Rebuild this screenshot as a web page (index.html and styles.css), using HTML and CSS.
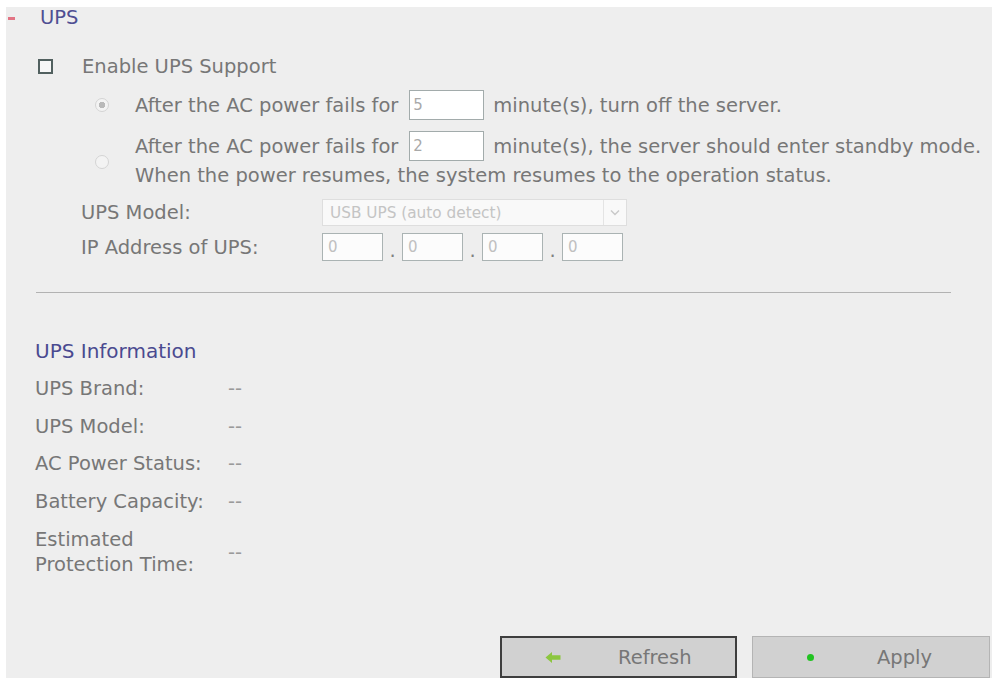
FILE: index.html
```html
<!DOCTYPE html>
<html lang="en">
<head>
<meta charset="utf-8">
<title>UPS</title>
<link rel="stylesheet" href="styles.css">
</head>
<body>
<div class="panel">
  <div class="sec-head">
    <span class="toggle"></span>
    <span class="sec-title">UPS</span>
  </div>

  <div class="enable">
    <input type="checkbox" class="chk">
    <span>Enable UPS Support</span>
  </div>

  <div class="opt opt1">
    <input type="radio" class="rad" name="mode" checked disabled>
    <span>After the AC power fails for</span>
    <input type="text" class="num" value="5" disabled>
    <span>minute(s), turn off the server.</span>
  </div>

  <div class="opt opt2">
    <input type="radio" class="rad" name="mode" disabled>
    <div class="opt-text">
      <div class="opt-line">
        <span>After the AC power fails for</span>
        <input type="text" class="num" value="2" disabled>
        <span>minute(s), the server should enter standby mode.</span>
      </div>
      <div class="opt-line2">When the power resumes, the system resumes to the operation status.</div>
    </div>
  </div>

  <div class="field model-row">
    <span class="field-label">UPS Model:</span>
    <div class="select">
      <span class="select-text">USB UPS (auto detect)</span>
      <span class="select-arrow">
        <svg width="10" height="7" viewBox="0 0 10 7"><path d="M1 1.5 L5 5.5 L9 1.5" fill="none" stroke="#c8c8c8" stroke-width="1.4"/></svg>
      </span>
    </div>
  </div>

  <div class="field ip-row">
    <span class="field-label">IP Address of UPS:</span>
    <div class="ip">
      <input type="text" class="ip-box" value="0" disabled>
      <span class="ip-dot">.</span>
      <input type="text" class="ip-box" value="0" disabled>
      <span class="ip-dot">.</span>
      <input type="text" class="ip-box" value="0" disabled>
      <span class="ip-dot">.</span>
      <input type="text" class="ip-box" value="0" disabled>
    </div>
  </div>

  <div class="divider"></div>

  <div class="info-title">UPS Information</div>

  <div class="info">
    <div class="info-row"><span class="info-label">UPS Brand:</span><span class="info-val">--</span></div>
    <div class="info-row"><span class="info-label">UPS Model:</span><span class="info-val">--</span></div>
    <div class="info-row"><span class="info-label">AC Power Status:</span><span class="info-val">--</span></div>
    <div class="info-row"><span class="info-label">Battery Capacity:</span><span class="info-val">--</span></div>
    <div class="info-row info-row-2"><span class="info-label">Estimated<br>Protection Time:</span><span class="info-val">--</span></div>
  </div>

  <div class="actions">
    <button class="btn btn-refresh">
      <svg class="btn-icon" width="16" height="13" viewBox="0 0 16 13"><path d="M0.5 6.5 L7 1 L7 4.3 L15.5 4.3 L15.5 8.7 L7 8.7 L7 12 Z" fill="#8cc63f"/></svg>
      <span>Refresh</span>
    </button>
    <button class="btn btn-apply">
      <span class="dot"></span>
      <span>Apply</span>
    </button>
  </div>
</div>
</body>
</html>
```

FILE: styles.css
```css
html, body {
  margin: 0;
  background: #ffffff;
}

body {
  padding-top: 7px;
  font-family: "DejaVu Sans", "Liberation Sans", sans-serif;
  font-size: 19.5px;
  color: #777777;
  overflow: hidden;
}

.panel {
  margin-left: 6px;
  width: 986px;
  height: 671px;
  background: #eeeeee;
  overflow: hidden;
}

.sec-head {
  display: flex;
  align-items: center;
  height: 22px;
  padding-left: 2px;
}

.toggle {
  width: 7px;
  height: 3px;
  background: #e27484;
  margin-right: 25px;
}

.sec-title {
  color: #4f4f93;
  line-height: 22px;
}

.enable {
  display: flex;
  align-items: center;
  height: 29px;
  margin-top: 23px;
  padding-left: 32px;
}

.chk {
  appearance: none;
  -webkit-appearance: none;
  box-sizing: border-box;
  width: 15px;
  height: 15px;
  margin: 0 29px 0 0;
  border: 2px solid #51605f;
  background: #f7f7f7;
}

.opt {
  display: flex;
  align-items: center;
  padding-left: 89px;
}

.opt1 {
  height: 30px;
  margin-top: 9px;
}

.opt2 {
  margin-top: 11px;
}

.rad {
  appearance: none;
  -webkit-appearance: none;
  box-sizing: border-box;
  width: 14px;
  height: 14px;
  margin: 0 26px 0 0;
  border-radius: 50%;
  border: 1px solid #d4d4d4;
  background: #f3f3f3;
  flex: none;
}

.rad:checked {
  background: radial-gradient(circle, #b9b9b9 0 3px, #f3f3f3 3.5px);
}

.opt2 .rad {
  margin-top: 3px;
}

.opt-line {
  display: flex;
  align-items: center;
  height: 30px;
}

.opt-line2 {
  line-height: 29px;
}

.num {
  box-sizing: border-box;
  width: 75px;
  height: 30px;
  margin: 0 9px 0 11px;
  padding: 0 0 0 3px;
  border: 1px solid #a2abab;
  background: #ffffff;
  font-family: "DejaVu Sans", sans-serif;
  font-size: 15px;
  color: #a9a9a9;
}

.field {
  display: flex;
  align-items: center;
  padding-left: 75px;
}

.field-label {
  width: 241px;
  flex: none;
}

.model-row {
  height: 27px;
  margin-top: 9px;
}

.select {
  box-sizing: border-box;
  width: 305px;
  height: 27px;
  display: flex;
  align-items: center;
  border: 1px solid #dedede;
  background: #f9f9f9;
}

.select-text {
  flex: 1;
  padding-left: 7px;
  font-size: 15.3px;
  color: #c4c4c4;
}

.select-arrow {
  box-sizing: border-box;
  width: 23px;
  height: 25px;
  display: flex;
  align-items: center;
  justify-content: center;
  border-left: 1px solid #e4e4e4;
}

.ip-row {
  height: 28px;
  margin-top: 7px;
}

.ip {
  display: flex;
  align-items: center;
}

.ip-box {
  box-sizing: border-box;
  width: 61px;
  height: 28px;
  margin: 0;
  padding: 0 0 0 5px;
  border: 1px solid #aab3b3;
  background: #fcfcfc;
  font-family: "DejaVu Sans", sans-serif;
  font-size: 15px;
  color: #c0c0c0;
}

.ip-dot {
  width: 19px;
  text-align: center;
  color: #808080;
  padding-top: 6px;
}

.divider {
  margin: 31px 0 0 30px;
  width: 915px;
  height: 1px;
  background: #b2b2b2;
}

.info-title {
  margin: 46px 0 0 29px;
  line-height: 24px;
  font-size: 20px;
  color: #4a4a90;
}

.info {
  margin-top: 7px;
  padding-left: 29px;
}

.info-row {
  display: flex;
  align-items: center;
  height: 37.5px;
}

.info-row-2 {
  height: 50px;
  margin-top: 7px;
  line-height: 25px;
}

.info-label {
  width: 193px;
  flex: none;
}

.info-val {
  color: #9a9a9a;
}

.actions {
  display: flex;
  justify-content: flex-end;
  gap: 15px;
  padding-right: 2px;
  margin-top: 59px;
}

.btn {
  box-sizing: border-box;
  width: 237px;
  height: 42px;
  display: flex;
  align-items: center;
  margin: 0;
  background: #d1d1d1;
  font-family: "DejaVu Sans", sans-serif;
  font-size: 19.5px;
  color: #777777;
  cursor: pointer;
}

.btn-refresh {
  border: 2px solid #3e3e3e;
  padding-left: 43px;
}

.btn-refresh .btn-icon {
  margin-right: 57px;
}

.btn-apply {
  width: 238px;
  border: 1px solid #b4b4b4;
  padding-left: 54px;
}

.dot {
  width: 7px;
  height: 7px;
  border-radius: 50%;
  background: #22c322;
  margin-right: 63px;
}
```
